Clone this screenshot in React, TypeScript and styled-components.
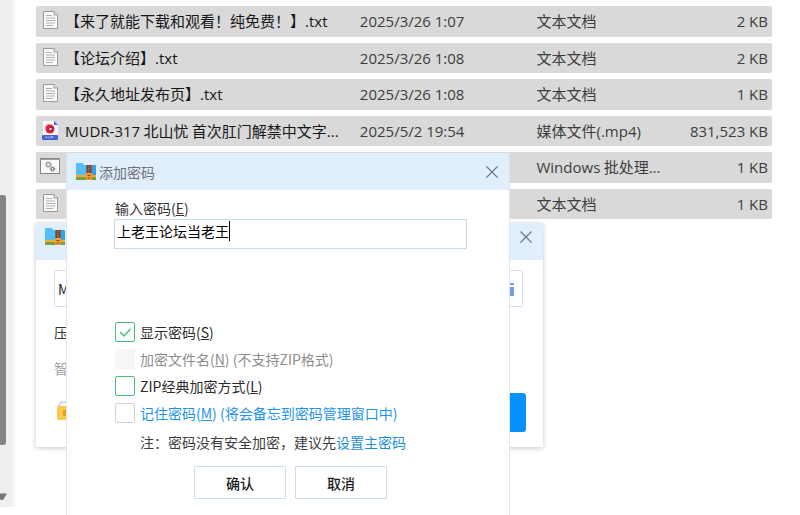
import React from "react";
import styled, { createGlobalStyle, css } from "styled-components";

const GlobalStyle = createGlobalStyle`
  *, *::before, *::after { box-sizing: border-box; }
  body {
    margin: 0;
    background: #fff;
    color: #1b1b1b;
    font-family: "Noto Sans CJK SC", sans-serif;
    font-size: 14px;
  }
  button, input { font: inherit; color: inherit; }
`;

const Page = styled.main`
  position: relative;
  display: flex;
  min-height: 100vh;
  overflow: hidden;
`;

const ScrollRail = styled.aside`
  display: flex;
  flex: 0 0 15px;
  margin-bottom: 8px;
  border-right: 1px solid #f5f5f5;
`;

const Track = styled.div`
  display: flex;
  flex-direction: column;
  justify-content: flex-end;
  gap: 48px;
  width: 13px;
  padding-bottom: 3px;
  background: #efefef;
`;

const Thumb = styled.div`
  width: 6px;
  height: 250px;
  border-radius: 0 3px 3px 0;
  background: #858585;
`;

const FileArea = styled.section`
  flex: 1;
  min-width: 0;
  padding: 0 28px 0 21px;
`;

const FileTable = styled.table`
  width: 100%;
  height: 225px;
  table-layout: fixed;
  border-collapse: separate;
  border-spacing: 0 6px;
  font-size: 15px;
  line-height: 20px;
`;

const Column = styled.col<{ $share: number }>`
  width: ${(p) => p.$share}%;
`;

const Cell = styled.td<{ $tone?: "soft"; $right?: boolean }>`
  padding: 0;
  background: #d9d9d9;
  color: ${(p) => (p.$tone ? "#3d3d3d" : "#161616")};
  white-space: nowrap;
  ${(p) =>
    p.$right &&
    css`
      padding-right: 4px;
      text-align: right;
    `}
  &:first-child { border-radius: 2px 0 0 2px; }
  &:last-child { border-radius: 0 2px 2px 0; }
`;

const NameBox = styled.div`
  display: flex;
  align-items: center;
  gap: 5px;
  padding-left: 4px;
`;

const Latin = styled.span`
  font-family: "Open Sans", sans-serif;
`;

const windowSurface = css`
  position: absolute;
  background: #fff;
`;

const ArchiveWindow = styled.section`
  ${windowSurface}
  top: 223px;
  left: 36px;
  width: 507px;
  box-shadow: 0 1px 5px rgba(0, 0, 0, 0.22);
`;

const PasswordWindow = styled.section`
  ${windowSurface}
  top: 153px;
  bottom: 0;
  left: 66px;
  width: 444px;
  border: 1px solid #dbe7f6;
  border-width: 0 1px;
`;

const TitleBar = styled.header<{ $raised?: boolean }>`
  display: flex;
  align-items: center;
  gap: 3px;
  height: 37px;
  padding: 0 10px ${(p) => (p.$raised ? 9 : 0)}px 9px;
  background: #e1eefc;
  color: #6c7177;
`;

const Title = styled.h1`
  flex: 1;
  margin: 0;
  font-size: 14px;
  font-weight: 400;
  line-height: 20px;
`;

const CloseButton = styled.button`
  display: flex;
  padding: 0;
  border: 0;
  background: none;
`;

const ArchiveBody = styled.div`
  display: flex;
  flex-direction: column;
  gap: 14px;
  padding: 10px 17px 15px 18px;
`;

const NameField = styled.div`
  display: flex;
  align-items: center;
  justify-content: space-between;
  height: 37px;
  margin-right: 3px;
  padding: 0 8px 0 3px;
  border: 1px solid #cfe0f5;
  border-radius: 2px;
`;

const NameInput = styled.input`
  width: 80%;
  padding: 0;
  border: 0;
  outline: 0;
  background: none;
`;

const ArchiveText = styled.p<{ $muted?: boolean }>`
  margin: 0;
  color: ${(p) => (p.$muted ? "#a3a3a3" : "#333")};
  line-height: 22px;
`;

const ArchiveActions = styled.div`
  display: flex;
  align-items: center;
  justify-content: space-between;
`;

const CompressButton = styled.button`
  width: 120px;
  height: 39px;
  border: 0;
  border-radius: 3px;
  background: #0591ff;
`;

const Form = styled.form`
  display: flex;
  flex-direction: column;
  padding: 8px 42px 0 48px;
`;

const FieldLabel = styled.label`
  margin-bottom: 1px;
  line-height: 20px;
  color: #333;
`;

const PasswordField = styled.div`
  display: flex;
  align-items: flex-start;
  height: 30px;
  margin-left: -1px;
  padding: 1px 2px;
  border: 1px solid #c9daea;
`;

const PasswordInput = styled.input`
  field-sizing: content;
  height: 20px;
  padding: 0;
  border: 0;
  outline: 0;
  background: none;
  caret-color: transparent;
  color: #000;
`;

const Caret = styled.span`
  width: 1px;
  height: 20px;
  background: #000;
`;

const Options = styled.div`
  display: flex;
  flex-direction: column;
  margin-top: 69px;
`;

const tones = { normal: "#2b2b2b", muted: "#8d8d8d", link: "#1b93f2" };
type Tone = keyof typeof tones;

const OptionLabel = styled.label<{ $tone: Tone }>`
  display: flex;
  align-items: center;
  gap: 5px;
  height: 27px;
  color: ${(p) => tones[p.$tone]};
  line-height: 20px;
  white-space: nowrap;
`;

const CheckSlot = styled.span`
  display: grid;
  > * { grid-area: 1 / 1; }
  svg { pointer-events: none; }
`;

const CheckBox = styled.input<{ $accent: boolean }>`
  appearance: none;
  width: 20px;
  height: 20px;
  margin: 0;
  border: 1px solid ${(p) => (p.$accent ? "#45c07b" : "#d0d0d0")};
  border-radius: 2px;
  background: #fff;
  &:disabled {
    border-color: #f5f5f5;
    background: #f7f7f7;
  }
`;

const Note = styled.p`
  margin: 6px 0 0 25px;
  color: #3c3c3c;
  line-height: 20px;
  white-space: nowrap;
`;

const MasterLink = styled.a`
  color: #1b8fd6;
  text-decoration: none;
`;

const Buttons = styled.div`
  display: flex;
  gap: 9px;
  margin: 14px 0 0 79px;
`;

const DialogButton = styled.button`
  width: 92px;
  height: 33px;
  padding: 0;
  border: 1px solid #cbdcf0;
  border-radius: 1px;
  background: #fff;
  color: #1c1c1c;
  font-weight: 500;
  line-height: 20px;
`;

const TextFileIcon = () => (
  <svg width="20" height="20" viewBox="0 1 20 20" aria-hidden="true">
    <path d="M3.5 1.5H14L17.5 5V18.5H3.5Z" fill="#fafafa" stroke="#9a9a9a" />
    <path d="M14 1.5V5H17.5" fill="#e4e4e4" stroke="#9a9a9a" />
    <path d="M6 5.5H12M6 8H15M6 10.5H15M6 13H15M6 15.5H13" stroke="#b0b0b0" />
  </svg>
);

const VideoFileIcon = () => (
  <svg width="20" height="20" viewBox="0 0 20 20" aria-hidden="true">
    <path d="M3 0H14L18 4V19H3Z" fill="#fbfbff" />
    <path d="M14 0V4H18Z" fill="#4a63d8" />
    <circle cx="10" cy="8" r="4.5" fill="#e2203a" />
    <path d="M5 8Q5 3 10 3" fill="none" stroke="#f08a94" />
    <circle cx="10.5" cy="8" r="2" fill="#5b1b30" />
    <path d="M9.500 6.500L12.500 8L9.500 9.500Z" fill="#fff" />
    <rect x="2" y="14" width="16" height="5" rx="1" fill="#4460d4" />
    <path d="M6 17.500V15.500L7.500 17L9 15.500V17.500M11 17.500V15.500H13V16.500H11" fill="none" stroke="#b9c5ff" strokeWidth="0.700" />
  </svg>
);

const BatchFileIcon = () => (
  <svg width="20" height="20" viewBox="0 1 20 20" aria-hidden="true">
    <rect x="0.5" y="2.5" width="19" height="15" fill="#fafafa" stroke="#858585" />
    <path d="M1 3.500H19" stroke="#a0a0a0" />
    <circle cx="8.5" cy="8.5" r="2" fill="none" stroke="#a2a2a2" strokeWidth="1.300" />
    <circle cx="8.5" cy="8.5" r="3" fill="none" stroke="#a2a2a2" strokeDasharray="1 1.400" />
    <circle cx="12.5" cy="13" r="1.5" fill="none" stroke="#777" strokeWidth="1.200" />
    <circle cx="12.5" cy="13" r="2.3" fill="none" stroke="#777" strokeDasharray="1 1" />
  </svg>
);

const ArchiveIcon = () => (
  <svg width="20" height="20" viewBox="0 0 20 20" aria-hidden="true">
    <path d="M0 2Q0 1 1 1H6L8 3H19Q20 3 20 4V14H0Z" fill="#3a9fe4" />
    <path d="M0 2Q0 1 1 1H6L8 3H10V13H0Z" fill="#56bdf6" />
    <rect y="13" width="20" height="3" fill="#f3a92c" />
    <rect y="15" width="20" height="3" fill="#74a243" />
    <rect x="10.500" y="3" width="5" height="10" fill="#7a4528" />
    <path d="M13 4V12" stroke="#d79c4a" strokeDasharray="1 1" />
    <rect x="10" y="11" width="6" height="7" rx="1" fill="#f2a034" />
    <path d="M11.500 13.500H14.500M11.500 16H14.500" stroke="#8a4520" />
  </svg>
);

const CloseIcon = () => (
  <svg width="14" height="14" viewBox="0 0 14 14" aria-hidden="true">
    <path d="M1.500 1.500L12.500 12.500M12.500 1.500L1.500 12.500" stroke="#6f777e" strokeWidth="1.200" />
  </svg>
);

const LockIcon = () => (
  <svg width="20" height="24" viewBox="0 0 20 24" aria-hidden="true">
    <path d="M5 8V5Q5 1 10 1Q15 1 15 5V8" fill="none" stroke="#d9d9d9" strokeWidth="2" />
    <rect x="3" y="5" width="15" height="14" rx="1.5" fill="#fbc850" />
    <path d="M9 9H13V15H9Z" fill="#e0a020" />
  </svg>
);

const PickerIcon = () => (
  <svg width="14" height="14" viewBox="0 0 14 14" aria-hidden="true">
    <path d="M0 1H14V3H0ZM0 5H14V14H0Z" fill="#729de8" />
  </svg>
);

const Tick = () => (
  <svg width="20" height="20" viewBox="0 0 20 20" aria-hidden="true">
    <path d="M5 10L9 14L15.500 7" fill="none" stroke="#45c07b" strokeWidth="1.500" />
  </svg>
);

const ScrollArrow = () => (
  <svg width="7" height="11" viewBox="0 0 7 11" aria-hidden="true">
    <path d="M0 0.500H7L3 7H1L0 6Z" fill="#777" />
  </svg>
);

type FileRow = {
  icon: React.ReactNode;
  name?: React.ReactNode;
  date?: string;
  type: React.ReactNode;
  size: string;
};

const files: FileRow[] = [
  {
    icon: <TextFileIcon />,
    name: <>【来了就能下载和观看！纯免费！】<Latin>.txt</Latin></>,
    date: "2025/3/26 1:07",
    type: "文本文档",
    size: "2 KB",
  },
  {
    icon: <TextFileIcon />,
    name: <>【论坛介绍】<Latin>.txt</Latin></>,
    date: "2025/3/26 1:08",
    type: "文本文档",
    size: "2 KB",
  },
  {
    icon: <TextFileIcon />,
    name: <>【永久地址发布页】<Latin>.txt</Latin></>,
    date: "2025/3/26 1:08",
    type: "文本文档",
    size: "1 KB",
  },
  {
    icon: <VideoFileIcon />,
    name: <><Latin>MUDR-317</Latin> 北山忧 首次肛门解禁中文字<Latin>...</Latin></>,
    date: "2025/5/2 19:54",
    type: <>媒体文件<Latin>(.mp4)</Latin></>,
    size: "831,523 KB",
  },
  {
    icon: <BatchFileIcon />,
    type: <><Latin>Windows</Latin> 批处理<Latin>...</Latin></>,
    size: "1 KB",
  },
  { icon: <TextFileIcon />, type: "文本文档", size: "1 KB" },
];

type OptionProps = {
  text: string;
  hotkey: string;
  extra?: string;
  tone?: Tone;
  accent?: boolean;
  checked?: boolean;
  disabled?: boolean;
};

function Option({ text, hotkey, extra, tone = "normal", accent = false, checked = false, disabled }: OptionProps) {
  const [on, setOn] = React.useState(checked);
  return (
    <OptionLabel $tone={tone}>
      <CheckSlot>
        <CheckBox
          type="checkbox"
          $accent={accent}
          checked={on}
          disabled={disabled}
          onChange={(e) => setOn(e.target.checked)}
        />
        {on && <Tick />}
      </CheckSlot>
      <span>
        {text}(<u>{hotkey}</u>){extra && ` ${extra}`}
      </span>
    </OptionLabel>
  );
}

export default function App() {
  return (
    <Page>
      <GlobalStyle />
      <ScrollRail>
        <Track>
          <Thumb />
          <ScrollArrow />
        </Track>
      </ScrollRail>

      <FileArea>
        <FileTable>
          <colgroup>
            <Column $share={44} />
            <Column $share={24} />
            <Column $share={16} />
            <Column $share={16} />
          </colgroup>
          <tbody>
            {files.map((f, i) => (
              <tr key={i}>
                <Cell><NameBox>{f.icon}<span>{f.name}</span></NameBox></Cell>
                <Cell $tone="soft"><Latin>{f.date}</Latin></Cell>
                <Cell $tone="soft">{f.type}</Cell>
                <Cell $tone="soft" $right><Latin>{f.size}</Latin></Cell>
              </tr>
            ))}
          </tbody>
        </FileTable>
      </FileArea>

      <ArchiveWindow>
        <TitleBar $raised>
          <ArchiveIcon />
          <Title />
          <CloseButton type="button" aria-label="关闭"><CloseIcon /></CloseButton>
        </TitleBar>
        <ArchiveBody>
          <NameField>
            <NameInput aria-label="文件名" defaultValue="M" />
            <PickerIcon />
          </NameField>
          <ArchiveText>压</ArchiveText>
          <ArchiveText $muted>智</ArchiveText>
          <ArchiveActions>
            <LockIcon />
            <CompressButton type="button" aria-label="压缩" />
          </ArchiveActions>
        </ArchiveBody>
      </ArchiveWindow>

      <PasswordWindow role="dialog" aria-label="添加密码">
        <TitleBar>
          <ArchiveIcon />
          <Title>添加密码</Title>
          <CloseButton type="button" aria-label="关闭"><CloseIcon /></CloseButton>
        </TitleBar>
        <Form onSubmit={(e) => e.preventDefault()}>
          <FieldLabel htmlFor="password">输入密码(<u>E</u>)</FieldLabel>
          <PasswordField>
            <PasswordInput id="password" defaultValue="上老王论坛当老王" />
            <Caret />
          </PasswordField>
          <Options>
            <Option text="显示密码" hotkey="S" accent checked />
            <Option text="加密文件名" hotkey="N" extra="(不支持ZIP格式)" tone="muted" disabled />
            <Option text="ZIP经典加密方式" hotkey="L" accent />
            <Option text="记住密码" hotkey="M" extra="(将会备忘到密码管理窗口中)" tone="link" />
          </Options>
          <Note>
            注：密码没有安全加密，建议先
            <MasterLink href="#master">设置主密码</MasterLink>
          </Note>
          <Buttons>
            <DialogButton type="submit">确认</DialogButton>
            <DialogButton type="button">取消</DialogButton>
          </Buttons>
        </Form>
      </PasswordWindow>
    </Page>
  );
}
